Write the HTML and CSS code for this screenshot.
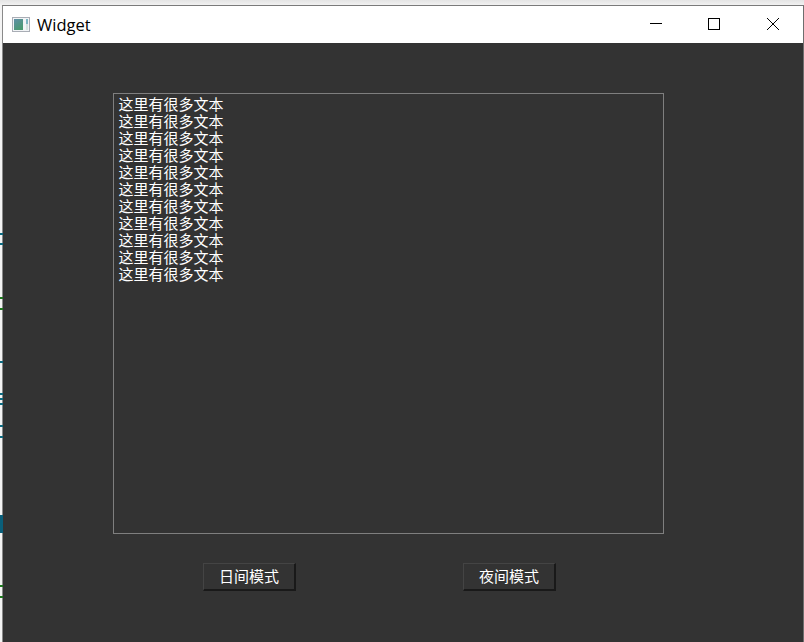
FILE: index.html
```html
<!DOCTYPE html>
<html lang="zh">
<head>
<meta charset="utf-8">
<title>Widget</title>
<link rel="stylesheet" href="styles.css">
</head>
<body>
<div class="desktop">
  <i class="tick teal" style="top:233px"></i>
  <i class="tick teal" style="top:243px"></i>
  <i class="tick green" style="top:297px"></i>
  <i class="tick green" style="top:308px"></i>
  <i class="tick teal" style="top:361px"></i>
  <i class="tick teal" style="top:393px"></i>
  <i class="tick teal" style="top:398px"></i>
  <i class="tick teal" style="top:403px"></i>
  <i class="tick teal" style="top:425px"></i>
  <i class="tick teal" style="top:436px"></i>
  <i class="tick block" style="top:515px"></i>
  <i class="tick green" style="top:585px"></i>
  <i class="tick green" style="top:596px"></i>
  <div class="window">
    <header class="titlebar">
      <svg class="app-icon" width="18" height="16" viewBox="0 0 18 16">
        <defs>
          <linearGradient id="pane" x1="0" y1="0" x2="0.6" y2="1">
            <stop offset="0" stop-color="#5f8fa8"/>
            <stop offset="1" stop-color="#4a9a70"/>
          </linearGradient>
        </defs>
        <rect x="0.5" y="0.5" width="17" height="14" fill="#f2f4f6" stroke="#a9adb5"/>
        <rect x="2" y="2" width="9" height="11" fill="url(#pane)"/>
        <rect x="14" y="2" width="2" height="5" fill="#7fb6c4"/>
        <rect x="14" y="7" width="2" height="6" fill="#d4e4e0"/>
      </svg>
      <span class="title">Widget</span>
      <div class="controls">
        <span class="control">
          <svg width="12" height="12" viewBox="0 0 12 12"><path d="M0 5.5H12" stroke="#000" fill="none"/></svg>
        </span>
        <span class="control">
          <svg width="12" height="12" viewBox="0 0 12 12"><rect x="0.5" y="0.5" width="11" height="11" stroke="#000" fill="none"/></svg>
        </span>
        <span class="control">
          <svg width="12" height="12" viewBox="0 0 12 12"><path d="M0 0L12 12M12 0L0 12" stroke="#000" fill="none"/></svg>
        </span>
      </div>
    </header>
    <main class="content">
      <div class="textbox">
        <div>这里有很多文本</div>
        <div>这里有很多文本</div>
        <div>这里有很多文本</div>
        <div>这里有很多文本</div>
        <div>这里有很多文本</div>
        <div>这里有很多文本</div>
        <div>这里有很多文本</div>
        <div>这里有很多文本</div>
        <div>这里有很多文本</div>
        <div>这里有很多文本</div>
        <div>这里有很多文本</div>
      </div>
      <div class="actions">
        <button class="btn">日间模式</button>
        <button class="btn">夜间模式</button>
      </div>
    </main>
  </div>
</div>
</body>
</html>
```
FILE: styles.css
```css
* { box-sizing: border-box; }
html, body { margin: 0; padding: 0; height: 100%; overflow: hidden; }
body { background: #f0f0f0; font-family: "Noto Sans CJK SC", "Liberation Sans", sans-serif; }
.desktop {
  position: relative;
  width: 804px;
  height: 642px;
  padding: 5px 0 0 2px;
  background: linear-gradient(#e4e4e4, #f4f4f4 6px);
}
.tick { position: absolute; left: 0; width: 3px; height: 2px; }
.teal { background: #0d6a80; }
.green { background: #1f7a1f; }
.block { height: 18px; background: #0a5f7a; }
.window {
  width: 802px;
  height: 637px;
  display: flex;
  flex-direction: column;
  border-top: 1px solid #7a7a7a;
  border-left: 1px solid #8a8a8a;
  border-right: 1px solid #6e6e6e;
  background: #333;
}
.titlebar {
  height: 37px;
  flex: none;
  display: flex;
  align-items: center;
  background: #fff;
  padding-left: 9px;
}
.app-icon { flex: none; margin-top: 1px; }
.title {
  margin-left: 7px;
  font: 16.5px/20px "Open Sans", "Noto Sans", sans-serif;
  color: #000;
}
.controls { margin-left: auto; display: flex; padding: 0 1px 2px 0; }
.control {
  width: 58.5px;
  height: 35px;
  display: flex;
  align-items: center;
  justify-content: center;
}
.content {
  flex: 1;
  background: #333;
  padding: 50px 0 0 110px;
}
.textbox {
  width: 551px;
  height: 441px;
  border: 1px solid #7f7f7f;
  padding: 1px 4.5px;
  color: #fff;
  font-size: 15px;
  line-height: 17px;
}
.actions {
  display: flex;
  gap: 167px;
  margin: 29px 0 0 90px;
}
.btn {
  width: 93px;
  height: 28px;
  padding: 0 0 2px;
  background: #333;
  color: #fff;
  font: 15px/20px "Noto Sans CJK SC", sans-serif;
  border-style: solid;
  border-width: 1px 2px 2px 1px;
  border-color: #444 #191919 #191919 #444;
}
```
